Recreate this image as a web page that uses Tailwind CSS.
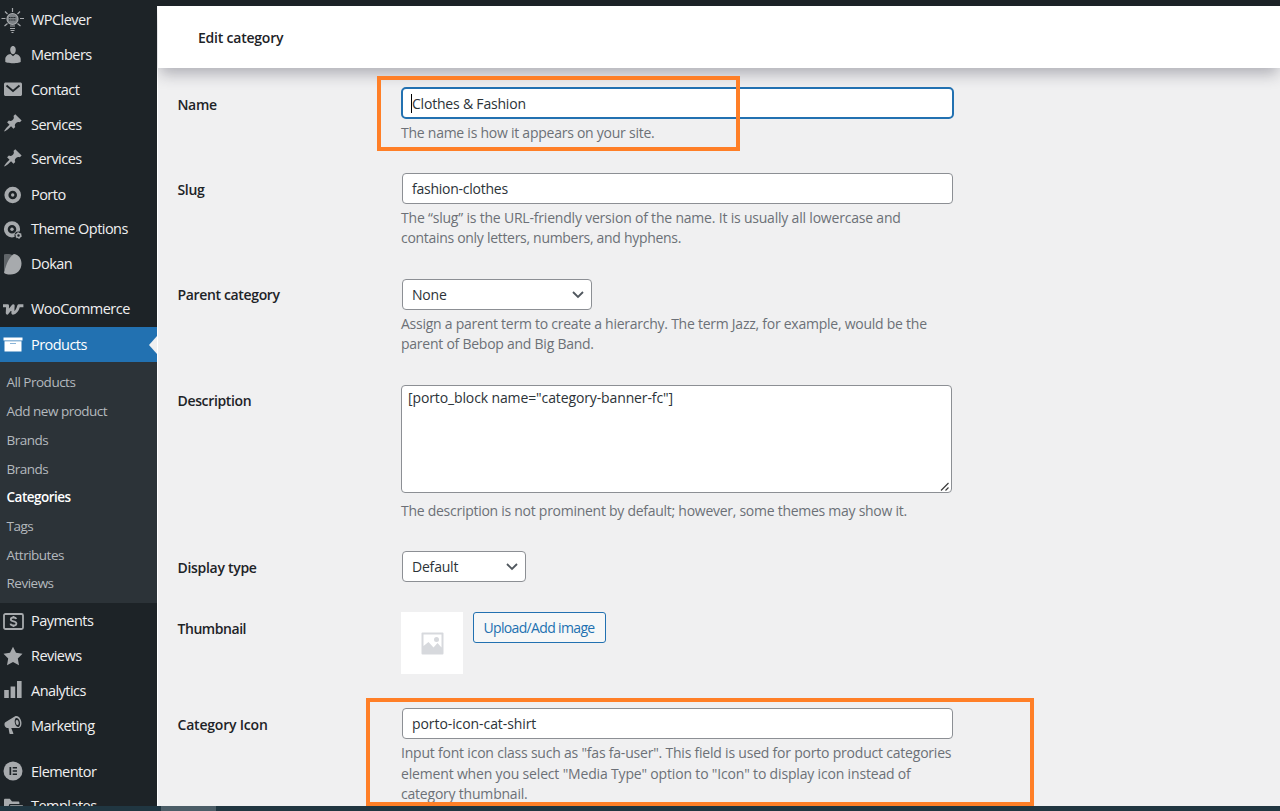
<!DOCTYPE html>
<html lang="en">
<head>
    <meta charset="UTF-8">
    <meta name="viewport" content="width=device-width, initial-scale=1.0">
    <title>Edit category</title>

    <!-- Tailwind CSS -->
    <script src="https://cdn.jsdelivr.net/npm/@tailwindcss/browser@4"></script>
</head>
<body class="relative h-[811px] w-[1280px] overflow-hidden bg-[#1d2327] font-['Open_Sans','Noto_Sans',sans-serif] text-sm text-[#3c434a]">
    <div class="flex h-[806px] overflow-hidden">
        <!-- Admin Menu -->
        <nav class="relative z-10 w-[157px] shrink-0 overflow-hidden bg-[#1d2327] pt-[3.3px] text-[14.5px] tracking-[-0.54px] whitespace-nowrap text-[#f0f0f1]">
            <a class="flex h-[34.75px] items-center gap-[5px] pl-0.5">
                <svg class="-ml-1 h-7 w-7 shrink-0 -translate-y-px" viewBox="0 0 28 28" fill="none" stroke="#a7aaad" stroke-width="1.2">
                    <circle cx="14.500" cy="13" r="5.500" fill="#7d8286"/>
                    <path d="M14.500 2v4M7 5.500l2.500 2.500M22 5.500l-2.500 2.500M3.500 12.500h4M22 12.500h4M6.500 20l3-2.500M22.500 20l-3-2.500"/>
                    <path d="M11 11.500h7M11 14h7" stroke="#1d2327" stroke-dasharray="1.5 .7"/>
                    <path d="M12 20h5M12 22.500h5M12.500 24.500h4M13.500 26.500h2"/>
                </svg>
                <span>WPClever</span>
            </a>
            <a class="flex h-[34.75px] items-center gap-2 pl-[3px]">
                <svg class="h-5 w-5 shrink-0" viewBox="0 0 20 20" fill="#a7aaad">
                    <path d="M10 9.250c-2.270 0-2.730-3.440-2.730-3.440C7 3.520 7.820 1 9.970 1c2.160 0 2.980 2.520 2.710 4.810 0 0-.410 3.440-2.680 3.440z"/>
                    <path d="M10 11.300L12.500 9c2.900.300 5.200 2.500 5.200 5v3s-3.800 1.300-7.700 1.300-7.700-1.300-7.700-1.300v-3c0-2.500 2.300-4.700 5.200-5z"/>
                </svg>
                <span>Members</span>
            </a>
            <a class="flex h-[34.75px] items-center gap-2 pl-[3px]">
                <svg class="h-5 w-5 shrink-0" viewBox="0 0 20 20" fill="#a7aaad">
                    <path d="M2.500 2.500h15c.700 0 1.500.700 1.500 1.500v10.500c0 .800-.800 1.500-1.500 1.500h-15C1.800 16 1 15.300 1 14.500V4c0-.800.800-1.500 1.500-1.500z"/>
                    <path d="M3.500 5.500L10 11l6.500-5.500" fill="none" stroke="#1d2327" stroke-width="1.800"/>
                </svg>
                <span>Contact</span>
            </a>
            <a class="flex h-[34.75px] items-center gap-2 pl-[3px]">
                <svg class="h-5 w-5 shrink-0 -translate-y-0.5" viewBox="0 0 20 20" fill="#a7aaad">
                    <path d="M10.440 3.020l1.820-1.820 6.360 6.350-1.830 1.820c-1.050-.680-2.480-.570-3.410.360l-.750.750c-.920.930-1.040 2.350-.350 3.410l-1.830 1.820-2.410-2.410-2.800 2.790c-.420.420-3.380 2.710-3.800 2.290s1.860-3.390 2.280-3.810l2.790-2.790L4.100 9.360l1.830-1.820c1.050.690 2.480.570 3.400-.360l.750-.750c.930-.920 1.050-2.350.360-3.410z"/>
                </svg>
                <span>Services</span>
            </a>
            <a class="flex h-[34.75px] items-center gap-2 pl-[3px]">
                <svg class="h-5 w-5 shrink-0 -translate-y-0.5" viewBox="0 0 20 20" fill="#a7aaad">
                    <path d="M10.440 3.020l1.820-1.820 6.360 6.350-1.830 1.820c-1.050-.680-2.480-.570-3.410.360l-.750.750c-.920.930-1.040 2.350-.350 3.410l-1.830 1.820-2.410-2.410-2.800 2.790c-.420.420-3.380 2.710-3.800 2.290s1.860-3.390 2.280-3.810l2.790-2.790L4.100 9.360l1.830-1.820c1.050.690 2.480.570 3.400-.360l.750-.750c.930-.920 1.050-2.350.360-3.410z"/>
                </svg>
                <span>Services</span>
            </a>
            <a class="flex h-[34.75px] items-center gap-2 pt-px pl-[3px]">
                <svg class="h-5 w-5 shrink-0" viewBox="0 0 20 20" fill="none" stroke="#a7aaad">
                    <circle cx="9.700" cy="10" r="6.300" stroke-width="4"/>
                    <circle cx="9.700" cy="10" r="1.700" fill="#a7aaad" stroke="none"/>
                </svg>
                <span>Porto</span>
            </a>
            <a class="flex h-[34.75px] items-center gap-2 pt-px pl-[3px]">
                <svg class="h-5 w-5 shrink-0" viewBox="0 0 20 20" fill="none" stroke="#a7aaad">
                    <circle cx="9" cy="9.300" r="6.200" stroke-width="3.800"/>
                    <circle cx="9" cy="9.300" r="1.700" fill="#a7aaad" stroke="none"/>
                    <circle cx="15.500" cy="15.500" r="4" fill="#1d2327" stroke="none"/>
                    <circle cx="15.500" cy="15.500" r="2" stroke-width="1.500"/>
                    <circle cx="15.500" cy="15.500" r="3" stroke-width=".8" stroke-dasharray="1.500 1.640"/>
                </svg>
                <span>Theme Options</span>
            </a>
            <a class="flex h-[34.75px] items-center gap-2 pl-[3px]">
                <svg class="h-[22px] w-5 shrink-0" viewBox="0 0 20 22">
                    <path d="M1 1.500c4-1 6.500 0 8.500.500L1 18z" fill="#5f6468"/>
                    <path d="M11 1c4.500.500 7.500 4.500 7.500 9.500C18.500 17 14 21.500 7.500 21.500c-3.500 0-6-.500-6.500-2C2 16 5 4 11 1z" fill="#a7aaad"/>
                </svg>
                <span>Dokan</span>
            </a>
            <a class="mt-[11px] flex h-[34.75px] items-center gap-2 pl-[3px]">
                <svg class="h-5 w-5 shrink-0 overflow-visible" viewBox="0 0 20 20" fill="none" stroke="#a7aaad" stroke-width="2.900" stroke-linejoin="round">
                    <path d="M0 5.700h4.600L4.200 13.200 10.200 5.700 9.800 13.200C13 13 14.500 10.500 15.800 5.700h4.600"/>
                </svg>
                <span>WooCommerce</span>
            </a>
            <a class="relative flex h-[34.7px] items-center gap-2 bg-[#2271b1] pt-px pl-[3px] text-white">
                <svg class="h-5 w-5 shrink-0" viewBox="0 0 20 20" fill="white">
                    <path d="M.500 2.500h19v3h-19zM1.500 6.300h17v10.200h-17z"/>
                    <path d="M7 8h6v1H7z" fill="#8ab4d8"/>
                </svg>
                <span>Products</span>
                <svg class="absolute top-[9px] right-0 h-[18px] w-2" viewBox="0 0 8 18"><path d="M8 0v18L0 9z" fill="#f0f0f1"/></svg>
            </a>
            <div class="flex h-[241px] flex-col bg-[#2c3338] pt-[7px] pl-[6.5px] text-[13.5px] tracking-[-0.5px] text-[#b4b9be]">
                <a class="flex h-[28.7px] items-center">All Products</a>
                <a class="flex h-[28.7px] items-center">Add new product</a>
                <a class="flex h-[28.7px] items-center">Brands</a>
                <a class="flex h-[28.7px] items-center">Brands</a>
                <a class="flex h-[28.7px] items-center font-semibold text-white">Categories</a>
                <a class="flex h-[28.7px] items-center">Tags</a>
                <a class="flex h-[28.7px] items-center">Attributes</a>
                <a class="flex h-[28.7px] items-center">Reviews</a>
            </div>
            <a class="mt-px flex h-[34.9px] items-center gap-[7px] pl-[3px]">
                <svg class="h-[17px] w-[21px] shrink-0" viewBox="0 0 21 17" fill="none" stroke="#a7aaad">
                    <rect x="1" y="1" width="19" height="15" rx="1.500" stroke-width="1.800"/>
                    <path d="M13.300 6c-.300-1.100-1.500-1.500-2.800-1.500-1.500 0-2.700.600-2.700 1.900 0 2.600 5.600 1.400 5.600 4 0 1.400-1.200 2.100-2.900 2.100-1.600 0-2.800-.600-3-1.900M10.500 3v2M10.500 12v2" stroke-width="1.800"/>
                </svg>
                <span>Payments</span>
            </a>
            <a class="flex h-[34.9px] items-center gap-2 pl-[3px]">
                <svg class="h-5 w-5 shrink-0" viewBox="0 0 20 20" fill="#a7aaad"><path d="M10 .700l3 6.100 6.500.900-4.700 4.800 1.200 6.700-6-3.200-6 3.200 1.200-6.700L.500 7.700 7 6.800z"/></svg>
                <span>Reviews</span>
            </a>
            <a class="flex h-[34.9px] items-center gap-2 pl-[3px]">
                <svg class="h-5 w-5 shrink-0 -translate-y-px" viewBox="0 0 20 20" fill="#a7aaad"><path d="M1.200 10h4.600v8H1.200zM7.600 6.500h4.600V18H7.600zM14 1h4.600v17H14z"/></svg>
                <span>Analytics</span>
            </a>
            <a class="flex h-[34.9px] items-center gap-2 pl-[3px]">
                <svg class="h-5 w-5 shrink-0 -translate-y-px" viewBox="0 0 20 20" fill="#a7aaad">
                    <path fill-rule="evenodd" d="M18.150 5.940c.460 1.620.380 3.220-.020 4.480-.420 1.280-1.260 2.180-2.300 2.480-.160.060-.260.060-.400.060-.060.020-.120.020-.180.020-.060.020-.140.020-.220.020h-6.800l2.220 5.500c.020.140-.060.260-.140.340-.080.100-.240.160-.340.160H6.950c-.100 0-.260-.060-.340-.160-.080-.080-.160-.200-.140-.340l-1-5.500H4.250l-.020-.020c-.500.060-1.080-.180-1.540-.620s-.880-1.080-1.060-1.880c-.240-.800-.200-1.560-.020-2.200.180-.620.580-1.080 1.060-1.300l.020-.020 9-5.400c.100-.060.180-.100.240-.160.060-.040.140-.080.240-.120.160-.080.280-.120.500-.180 1.040-.300 2.240.100 3.220.980s1.840 2.240 2.260 3.860zm-2.580 5.980c.100-.020.200-.060.280-.120.480-.300.840-.920 1.080-1.800.240-.920.240-2.080-.120-3.360-.300-1.200-.880-2.260-1.580-2.920-.680-.640-1.440-.940-2.040-.760-.100.020-.200.060-.280.120-.480.300-.840.920-1.080 1.800-.240.920-.240 2.080.120 3.360.300 1.200.880 2.260 1.580 2.920.680.640 1.440.940 2.040.760z"/>
                    <ellipse cx="14.200" cy="7.500" rx="1.500" ry="2.500" transform="rotate(-12 14.200 7.500)"/>
                </svg>
                <span>Marketing</span>
            </a>
            <a class="mt-[11px] flex h-[34.9px] items-center gap-2 pt-px pl-[3px]">
                <svg class="h-5 w-5 shrink-0 -translate-y-px" viewBox="0 0 20 20" fill="#a7aaad">
                    <circle cx="10" cy="10" r="9.500"/>
                    <path d="M6.500 6h1.700v8H6.500zM9.700 6h4.300v1.600H9.700zM9.700 9.200h4.300v1.600H9.700zM9.700 12.400h4.300V14H9.700z" fill="#1d2327"/>
                </svg>
                <span>Elementor</span>
            </a>
            <a class="flex h-[34.75px] items-center gap-2 pl-[3px]">
                <svg class="h-5 w-5 shrink-0" viewBox="0 0 20 20" fill="#a7aaad">
                    <path d="M1 17V3c0-.700.500-1.200 1.200-1.200h4.600L9 4.500h6.200c.700 0 1.200.500 1.200 1.200V7H6.500L2.500 17z"/>
                    <path d="M7.300 8.300H20L16.500 17h-13z"/>
                </svg>
                <span>Templates</span>
            </a>
        </nav>

        <!-- Main Content -->
        <main class="mt-1.5 flex-1 border-l border-white bg-[#f0f0f1]">
            <header class="flex h-[62px] items-center bg-white pt-px pl-10 font-semibold tracking-[-0.22px] text-[#1d2327] shadow-[0_8px_14px_-2px_rgba(40,40,60,0.32)]">
                <h1>Edit category</h1>
            </header>

            <form class="pt-[19px] pl-[19.5px] tracking-[-0.2px]">
                <div class="flex h-[86px]">
                    <label class="w-[223.5px] shrink-0 pt-[7.5px] font-semibold tracking-[-0.35px] text-[#1d2327]">Name</label>
                    <div>
                        <div class="flex h-8 w-[553px] items-center rounded-[5px] border-2 border-[#2271b1] bg-white pt-px pl-2 text-[#2c3338]">
                            <span class="-mt-px h-[19px] w-px bg-black"></span>Clothes &amp; Fashion
                        </div>
                        <p class="mt-1 leading-5 tracking-[-0.25px] text-[#6c7077]">The name is how it appears on your site.</p>
                    </div>
                </div>
                <div class="flex h-[106px]">
                    <label class="w-[223.5px] shrink-0 pt-[7px] font-semibold tracking-[-0.35px] text-[#1d2327]">Slug</label>
                    <div>
                        <div class="ml-px flex h-[31px] w-[551px] items-center rounded border border-[#8c8f94] bg-white pt-px pl-[9px] tracking-[-0.25px] text-[#2c3338]">fashion-clothes</div>
                        <p class="mt-1 leading-5 tracking-[-0.2px] whitespace-nowrap text-[#6c7077]">The “slug” is the URL-friendly version of the name. It is usually all lowercase and<br><span class="tracking-[-0.3px]">contains only letters, numbers, and hyphens.</span></p>
                    </div>
                </div>
                <div class="flex h-[106px]">
                    <label class="w-[223.5px] shrink-0 pt-1.5 font-semibold tracking-[-0.35px] text-[#1d2327]">Parent category</label>
                    <div>
                        <div class="ml-px flex h-[31px] w-[190px] items-center justify-between rounded border border-[#8c8f94] bg-white pt-px pr-[7px] pl-[9px] text-[#2c3338]">
                            None
                            <svg class="h-3 w-3" viewBox="0 0 12 12" fill="none" stroke="#50575e" stroke-width="1.800"><path d="M1 3l5 5 5-5"/></svg>
                        </div>
                        <p class="mt-1 leading-5 tracking-[-0.25px] whitespace-nowrap text-[#6c7077]">Assign a parent term to create a hierarchy. The term Jazz, for example, would be the<br>parent of Bebop and Big Band.</p>
                    </div>
                </div>
                <div class="flex h-[166px]">
                    <label class="w-[223.5px] shrink-0 pt-1.5 font-semibold tracking-[-0.35px] text-[#1d2327]">Description</label>
                    <div>
                        <div class="relative h-[108px] w-[551px] rounded border border-[#8c8f94] bg-white pt-0.5 pl-1.5 tracking-[-0.12px] text-[#2c3338]">
                            [porto_block name="category-banner-fc"]
                            <svg class="absolute right-px bottom-0 h-2.5 w-2.5" viewBox="0 0 10 10" fill="none" stroke="#3c3c3c" stroke-width="1.200"><path d="M1 8.500L8.500 1M5.500 8.500l3-3"/></svg>
                        </div>
                        <p class="mt-2 leading-5 tracking-[-0.27px] text-[#6c7077]">The description is not prominent by default; however, some themes may show it.</p>
                    </div>
                </div>
                <div class="flex h-[61px]">
                    <label class="w-[223.5px] shrink-0 pt-[7px] font-semibold tracking-[-0.3px] text-[#1d2327]">Display type</label>
                    <div class="ml-px flex h-[31px] w-[124px] items-center justify-between rounded border border-[#8c8f94] bg-white pt-px pr-[7px] pl-[9px] text-[#2c3338]">
                        Default
                        <svg class="h-3 w-3" viewBox="0 0 12 12" fill="none" stroke="#50575e" stroke-width="1.800"><path d="M1 3l5 5 5-5"/></svg>
                    </div>
                </div>
                <div class="flex h-24 items-start">
                    <label class="w-[223.5px] shrink-0 pt-[7px] font-semibold tracking-[-0.45px] text-[#1d2327]">Thumbnail</label>
                    <div class="flex h-[62px] w-[62px] items-center justify-center bg-white">
                        <svg class="h-[23px] w-[23px]" viewBox="0 0 23 23">
                            <rect x=".500" y=".500" width="22" height="22" rx="1" fill="#d7d9dd"/>
                            <path d="M2.500 2.500h18v13l-4-4.500-4 4.500-5-5.500-5 4z" fill="white"/>
                            <circle cx="15.500" cy="7.500" r="2.500" fill="#d7d9dd"/>
                        </svg>
                    </div>
                    <button type="button" class="ml-[9.5px] h-[31px] w-[133px] rounded-[3px] border border-[#2271b1] bg-[#f6f7f7] tracking-[-0.65px] whitespace-nowrap text-[#2271b1]">Upload/Add image</button>
                </div>
                <div class="flex">
                    <label class="w-[223.5px] shrink-0 pt-[7px] font-semibold text-[#1d2327]">Category Icon</label>
                    <div>
                        <div class="ml-px flex h-[31px] w-[551px] items-center rounded border border-[#8c8f94] bg-white pl-[9px] tracking-[-0.08px] text-[#2c3338]">porto-icon-cat-shirt</div>
                        <p class="mt-1 leading-[20.500px] tracking-[-0.21px] whitespace-nowrap text-[#6c7077]">Input font icon class such as "fas fa-user". This field is used for porto product categories<br><span class="tracking-[-0.17px]">element when you select "Media Type" option to "Icon" to display icon instead of</span><br>category thumbnail.</p>
                    </div>
                </div>
            </form>
        </main>
    </div>

    <!-- Taskbar edge -->
    <div class="h-[5px] bg-[#203641] pl-[161px]">
        <div class="h-full w-[55px] bg-[#4b5d67]"></div>
    </div>

    <!-- Highlight frames -->
    <div class="absolute top-[76px] left-[377px] h-[75px] w-[363px] border-4 border-[#ff7f27]"></div>
    <div class="absolute top-[698px] left-[366px] h-[108px] w-[668px] border-4 border-[#ff7f27]"></div>
</body>
</html>
